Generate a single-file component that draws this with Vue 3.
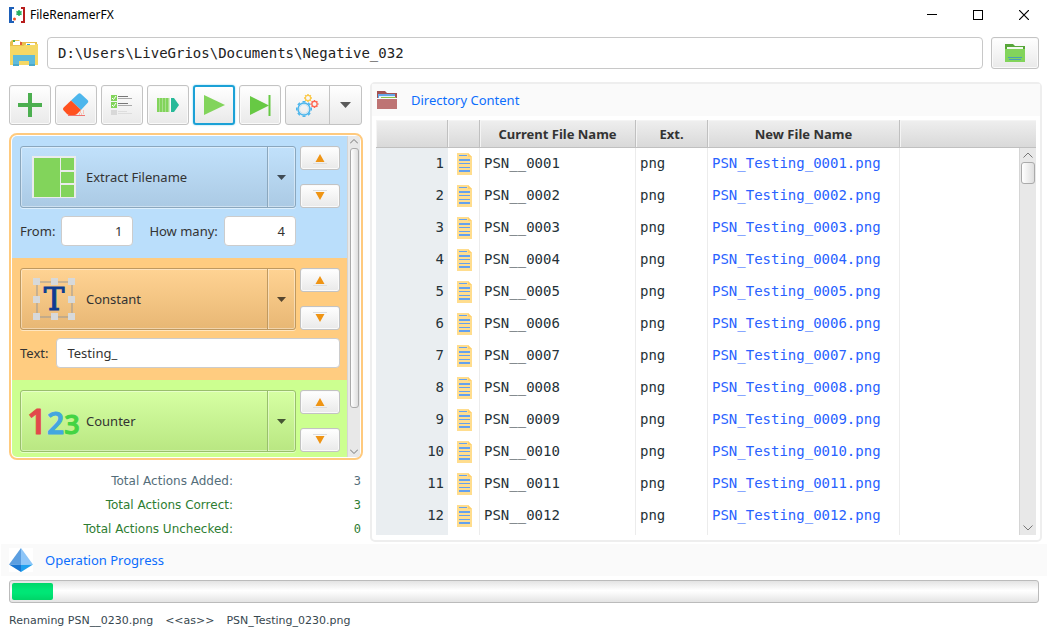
<script setup>
import { ref } from 'vue'

const path = ref('D:\\Users\\LiveGrios\\Documents\\Negative_032')
const from = ref('1')
const howMany = ref('4')
const constantText = ref('Testing_')

const rows = Array.from({ length: 12 }, (_, i) => {
  const n = String(i + 1).padStart(4, '0')
  return { id: i + 1, current: `PSN__${n}`, ext: 'png', next: `PSN_Testing_${n}.png` }
})

const actions = [
  { key: 'extract', label: 'Extract Filename' },
  { key: 'constant', label: 'Constant' },
  { key: 'counter', label: 'Counter' }
]

const totals = [
  { label: 'Total Actions Added:', value: 3, tone: 'slate' },
  { label: 'Total Actions Correct:', value: 3, tone: 'green' },
  { label: 'Total Actions Unchecked:', value: 0, tone: 'green' }
]

const progress = 4
const gearTeeth = [0, 45, 90, 135, 180, 225, 270, 315]
</script>

<template>
  <div class="window">
    <header class="titlebar">
      <svg class="app-icon" width="16" height="16" viewBox="0 0 16 16" aria-hidden="true">
        <path d="M0 0h5v2H3v12h2v2H0z" fill="#1d5fb8" />
        <path d="M16 0h-4v2h2v12h-2v2h4z" fill="#b71c1c" />
        <path d="M10 3v6M7.400 4.500l5.200 3M12.600 4.500l-5.200 3" stroke="#27ae60" stroke-width="1.500" />
        <circle cx="5.500" cy="12" r="1.500" fill="#f4511e" />
      </svg>
      <span class="title">FileRenamerFX</span>
      <div class="window-controls">
        <button type="button" aria-label="Minimize"><svg width="10" height="10"><path d="M0 4.500h10" stroke="#000" /></svg></button>
        <button type="button" aria-label="Maximize"><svg width="10" height="10"><rect x=".5" y=".5" width="9" height="9" fill="none" stroke="#000" /></svg></button>
        <button type="button" aria-label="Close"><svg width="10" height="10"><path d="M0 0l10 10M10 0L0 10" stroke="#000" stroke-width="1.200" /></svg></button>
      </div>
    </header>

    <div class="path-row">
      <svg width="30" height="30" viewBox="0 0 30 30" aria-hidden="true">
        <path d="M1 4l2-2h7l2 2h16v22H1z" fill="#e8bf4b" />
        <path d="M4 3h7v4H4z" fill="#fff" /><path d="M4 2h2v2H4z" fill="#4caf50" /><path d="M11 4h2v3h-2z" fill="#e05a3a" />
        <path d="M1 8h13l3-2h12v21H1z" fill="#f5d865" />
        <path d="M17 5h9v2h-9z" fill="#fff" /><path d="M18 6h3v1h-3z" fill="#29a3dc" />
        <path d="M4 17h22v11h-6v-5H10v5H4z" fill="#5fbbdb" />
        <path d="M4 26h6v2H4zM20 26h6v2h-6z" fill="#4aa9cb" />
      </svg>
      <textarea v-model="path" class="path-input" rows="1" wrap="off" aria-label="Directory path" spellcheck="false"></textarea>
      <button type="button" class="btn browse" aria-label="Browse directory">
        <svg width="20" height="18" viewBox="0 0 20 18">
          <path d="M0 0h8l2 2h10v4H0z" fill="#57a639" /><path d="M2 3h16v3H2z" fill="#f3faef" />
          <path d="M0 5h20v13H0z" fill="#82d45b" /><path d="M3 13.500h14M4 15.500h12" stroke="#4a9fb5" />
        </svg>
      </button>
    </div>

    <main class="main">
      <section class="left" aria-label="Rename actions">
        <div class="toolbar">
          <button type="button" class="btn tool" aria-label="Add action">
            <svg width="24" height="24"><path d="M12 0v24M0 12h24" stroke="#4caf50" stroke-width="4" /></svg>
          </button>
          <button type="button" class="btn tool" aria-label="Clear actions">
            <svg width="26" height="24" viewBox="0 0 26 24">
              <path d="M8 7.500L15 1q1.500-1.300 3 0l6.500 6q1.500 1.500 0 3L18 17z" fill="#4db6ec" />
              <path d="M8 7.500L18 17l-4 4q-1 1-2.500 1H6.500q-1.500 0-2.500-1l-3.300-3.400q-1.400-1.600 0-3.200z" fill="#ff511f" />
              <path d="M5 22.500h17" stroke="#ef7470" />
              <path d="M17 19h1M20 18h1M18 21h1M16 21h1M20 20h1" stroke="#ff9a7d" />
            </svg>
          </button>
          <button type="button" class="btn tool" aria-label="Check all">
            <svg width="22" height="22" viewBox="0 0 22 22">
              <path d="M0 1h6v6H0zM0 8h6v6H0z" fill="#82d45b" /><path d="M0 16h6v5H0z" fill="#d8d8d8" />
              <path d="M1 4l1.500 1.500L5 2M1 11l1.500 1.500L5 9" stroke="#fff" fill="none" />
              <path d="M7 2.500h10M7 9.500h10" stroke="#777" /><path d="M7 4.500h14M7 11.500h14" stroke="#aaa" />
              <path d="M7 17.500h9M7 19.500h14" stroke="#ddd" />
            </svg>
          </button>
          <button type="button" class="btn tool" aria-label="Queue">
            <svg width="22" height="14" viewBox="0 0 22 14">
              <path d="M0 0h13v14H0z" fill="#a8df8e" /><path d="M1 0v14M4 0v14M7 0v14M10 0v14" stroke="#82d45b" stroke-width="2" />
              <path d="M14 0h3l5 7-5 7h-3z" fill="#27b999" /><path d="M13 0v14" stroke="#fff" />
            </svg>
          </button>
          <button type="button" class="btn tool focused" aria-label="Run">
            <svg width="21" height="20"><path d="M0 0l21 10L0 20z" fill="#82d45b" /></svg>
          </button>
          <button type="button" class="btn tool" aria-label="Run to end">
            <svg width="21" height="21"><path d="M0 1l19 9.500L0 20z" fill="#67c944" /><path d="M19.500 0v21" stroke="#67c944" stroke-width="2" /></svg>
          </button>
          <div class="split">
            <button type="button" class="split-main" aria-label="Settings">
              <svg width="23" height="23" viewBox="0 0 23 23">
                <g fill="none" stroke="#4db6ec">
                  <circle cx="8" cy="15" r="6" stroke-width="1.500" />
                  <path v-for="a in gearTeeth" :key="a" d="M8 8.500v-1.500" stroke-width="3" :transform="`rotate(${a} 8 15)`" />
                </g>
                <circle cx="8" cy="15" r="4.500" fill="none" stroke="#b6ddf2" stroke-width=".7" />
                <g fill="none" stroke="#fbc94a">
                  <circle cx="12" cy="4" r="2.600" stroke-width="1.200" />
                  <path v-for="a in gearTeeth" :key="a" d="M12 1.200V0" stroke-width="1.500" :transform="`rotate(${a} 12 4)`" />
                </g>
                <g fill="none" stroke="#ff6650">
                  <circle cx="18.500" cy="10" r="2.600" stroke-width="1.200" />
                  <path v-for="a in gearTeeth" :key="a" d="M18.500 7.200V6" stroke-width="1.500" :transform="`rotate(${a} 18.500 10)`" />
                </g>
              </svg>
            </button>
            <button type="button" class="split-menu" aria-label="More settings">
              <svg width="11" height="6"><path d="M0 0h11L5.500 6z" fill="#5a5a5a" /></svg>
            </button>
          </div>
        </div>

        <div class="action-list">
          <div class="action-items">
            <article v-for="a in actions" :key="a.key" class="action" :class="a.key">
              <div class="action-head">
                <div class="card">
                  <button type="button" class="card-main">
                    <span class="card-icon">
                      <svg v-if="a.key === 'extract'" width="44" height="42" viewBox="0 0 44 42">
                        <path d="M0 0h44v42H0z" fill="#eaeceb" />
                        <path d="M2 2h26v39H2zM29 2h13v12H29zM29 16h13v11H29zM29 29h13v12H29z" fill="#82d45b" />
                      </svg>
                      <svg v-else-if="a.key === 'constant'" width="44" height="44" viewBox="0 0 44 44">
                        <path d="M5 5h35v35H5z" fill="none" stroke="#999" />
                        <path d="M1 1h7v7H1zM19 1h7v7h-7zM36 1h7v7h-7zM1 19h7v7H1zM36 19h7v7h-7zM1 36h7v7H1zM19 36h7v7h-7zM36 36h7v7h-7z" fill="#d7d9da" />
                        <text x="22" y="33" text-anchor="middle" class="glyph-t">T</text>
                      </svg>
                      <svg v-else width="54" height="56" viewBox="0 0 54 56">
                        <text x="0" y="41" class="digits"><tspan class="d1">1</tspan><tspan class="d2">2</tspan><tspan class="d3">3</tspan></text>
                      </svg>
                    </span>
                    <span>{{ a.label }}</span>
                  </button>
                  <button type="button" class="card-menu" :aria-label="`${a.label} options`">
                    <svg width="9" height="5"><path d="M0 0h9L4.500 5z" fill="#000" fill-opacity=".65" /></svg>
                  </button>
                </div>
                <div class="movers">
                  <button type="button" class="btn mover" :aria-label="`Move ${a.label} up`">
                    <svg width="14" height="14"><path d="M7 3l4.500 8h-9z" fill="#ef9414" /><path d="M0 12.500h14" stroke="#ddd" /></svg>
                  </button>
                  <button type="button" class="btn mover" :aria-label="`Move ${a.label} down`">
                    <svg width="14" height="14"><path d="M7 11l4.500-8h-9z" fill="#ef9414" /><path d="M0 1.500h14" stroke="#ddd" /></svg>
                  </button>
                </div>
              </div>
              <div v-if="a.key === 'extract'" class="fields">
                <label for="from">From:</label>
                <input id="from" v-model="from" class="num" type="text" />
                <label for="count" class="second">How many:</label>
                <input id="count" v-model="howMany" class="num" type="text" />
              </div>
              <div v-else-if="a.key === 'constant'" class="fields">
                <label for="text">Text:</label>
                <input id="text" v-model="constantText" class="wide" type="text" />
              </div>
            </article>
          </div>
          <div class="scroll slim" aria-hidden="true">
            <svg width="8" height="5"><path d="M0 4.500l4-4 4 4" fill="none" stroke="#777" /></svg>
            <div class="track"><div class="thumb"></div></div>
            <svg width="8" height="5"><path d="M0 .5l4 4 4-4" fill="none" stroke="#777" /></svg>
          </div>
        </div>

        <dl class="totals">
          <div v-for="t in totals" :key="t.label" :class="t.tone">
            <dt>{{ t.label }}</dt>
            <dd>{{ t.value }}</dd>
          </div>
        </dl>
      </section>

      <section class="directory">
        <h2 class="band">
          <svg width="20" height="18" viewBox="0 0 20 18" aria-hidden="true">
            <path d="M0 0h8l2 2h10v5H0z" fill="#a35252" /><path d="M1 3h17v4H1z" fill="#64a8e8" />
            <path d="M2 5h16v2H2z" fill="#e6f1fb" /><path d="M4 6.500h15" stroke="#8bc34a" />
            <path d="M0 8h20v10H0z" fill="#be7474" />
          </svg>
          Directory Content
        </h2>
        <div class="table-wrap">
          <table>
            <colgroup><col class="c-num" /><col class="c-icon" /><col class="c-name" /><col class="c-ext" /><col class="c-new" /><col /></colgroup>
            <thead>
              <tr><th></th><th></th><th scope="col">Current File Name</th><th scope="col">Ext.</th><th scope="col">New File Name</th><th></th></tr>
            </thead>
            <tbody>
              <tr v-for="r in rows" :key="r.id">
                <td class="num-cell">{{ r.id }}</td>
                <td class="icon-cell">
                  <svg width="15" height="22" viewBox="0 0 15 22">
                    <path d="M0 0h11l4 4v18H0z" fill="#ffdd8e" /><path d="M11 0l4 4h-4z" fill="#ffd06c" />
                    <path d="M2 2.500h8M2 10.500h11M2 14.500h11" stroke="#64a1ee" /><path d="M2 7h11M2 18h11" stroke="#64a1ee" stroke-width="2" />
                  </svg>
                </td>
                <td>{{ r.current }}</td>
                <td>{{ r.ext }}</td>
                <td class="new-name">{{ r.next }}</td>
                <td></td>
              </tr>
              <tr class="tail" aria-hidden="true"><td class="num-cell"></td><td></td><td></td><td></td><td></td><td></td></tr>
            </tbody>
          </table>
          <div class="scroll table-scroll" aria-hidden="true">
            <svg width="10" height="6"><path d="M.5 5.500L5 1l4.500 4.500" fill="none" stroke="#777" /></svg>
            <div class="track"><div class="thumb"></div></div>
            <svg width="10" height="6"><path d="M.5 .5L5 5 9.500 .5" fill="none" stroke="#777" /></svg>
          </div>
        </div>
      </section>
    </main>

    <footer class="operation">
      <h2 class="band">
        <svg width="24" height="24" viewBox="0 0 24 24" aria-hidden="true">
          <path d="M0 0h24v24H0z" fill="#fff" />
          <path d="M12 0v17L0 16.500z" fill="#5b9ee0" /><path d="M12 0l12 16.500L12 17z" fill="#8ec6f8" />
          <path d="M0 16.500l12 .5v7z" fill="#1976d2" /><path d="M24 16.500L12 17v7z" fill="#1ea0ee" />
        </svg>
        Operation Progress
      </h2>
      <div class="progress" role="progressbar" aria-label="Operation Progress" aria-valuemin="0" aria-valuemax="100" :aria-valuenow="progress">
        <div class="bar" :style="{ width: progress + '%' }"></div>
      </div>
      <p class="status"><span>Renaming PSN__0230.png</span><span>&lt;&lt;as&gt;&gt;</span><span>PSN_Testing_0230.png</span></p>
    </footer>
  </div>
</template>

<style>
body { margin: 0; background: #fff; }
</style>

<style scoped>
* { box-sizing: border-box; }
button, input { font: inherit; color: inherit; margin: 0; padding: 0; }
button { background: none; border: 0; }
svg { display: block; flex: none; }
.window {
  display: flex; flex-direction: column; height: 100vh; min-height: 560px;
  background: #fff; color: #333; font: 13px/20px "Noto Sans", "Open Sans", sans-serif; overflow: hidden;
}
.titlebar { display: flex; align-items: center; height: 30px; flex: none; padding: 0 1px 0 9px; color: #000; font-size: 12px; }
.title { margin-left: 5px; }
.window-controls { display: flex; margin-left: auto; }
.window-controls button { display: grid; place-items: center; width: 46px; height: 30px; }
.path-row { display: flex; align-items: center; gap: 8px; flex: none; margin-top: 7px; padding: 0 9px; }
.path-input {
  display: block; flex: 1; min-width: 0; height: 32px; margin: 0; padding: 4px 10px; overflow: hidden; resize: none;
  border: 1px solid #c8c8c8; border-radius: 4px; background: #fff;
  font: 14px/22px "DejaVu Sans Mono", monospace; color: #222;
}
.btn {
  display: grid; place-items: center; border: 1px solid #c3c3c3; border-radius: 3px;
  background: linear-gradient(#fff, #e9e9e9); box-shadow: inset 0 0 0 1px #fafafa;
}
.browse { width: 48px; height: 32px; }
.main { display: flex; flex: 1; gap: 7px; min-height: 0; padding: 13px 6px 2px 9px; }
.left { display: flex; flex-direction: column; flex: none; width: 354px; padding: 3px 0 1px; }
.toolbar { display: flex; gap: 4px; flex: none; }
.tool { width: 42px; height: 40px; }
.focused { border: 2px solid #1ba1d6; box-shadow: 0 0 2px #7fd0ee; }
.split {
  display: flex; width: 77px; height: 40px; border: 1px solid #c3c3c3; border-radius: 3px;
  background: linear-gradient(#fff, #e9e9e9);
}
.split button { display: grid; place-items: center; }
.split-main { flex: 1; border-right: 1px solid #c3c3c3; }
.split-menu { width: 31px; }
.action-list {
  display: flex; flex: 1; min-height: 0; margin-top: 8px; padding: 1px; overflow: hidden;
  border: 2px solid #ffca7e; border-radius: 8px; background: #fff;
}
.action-items { flex: 1; min-width: 0; overflow: hidden; border-radius: 5px 0 0 5px; }
.action { min-height: 122px; padding: 10px 7px 0 8px; }
.extract { background: #badefb; --top: #c1e1fb; --bottom: #abcae4; --edge: #8ba7bd; }
.constant { background: #ffcc80; --top: #ffd393; --bottom: #e8b774; --edge: #bf9960; }
.counter { background: #ccff90; --top: #d6ffa3; --bottom: #b9e782; --edge: #99bf6c; }
.action-head { display: flex; gap: 4px; }
.card {
  display: flex; flex: 1; height: 62px; border: 1px solid var(--edge); border-radius: 3px;
  background: linear-gradient(var(--top), var(--bottom));
  box-shadow: inset 0 0 0 1px rgba(255, 255, 255, .4), 0 1px 0 rgba(255, 255, 255, .5);
}
.card-main { display: flex; align-items: center; flex: 1; padding-left: 8px; text-align: left; }
.card-icon { display: grid; place-items: center; place-content: center; width: 50px; height: 60px; margin-right: 7px; }
.card-menu { display: grid; place-items: center; width: 28px; border-left: 1px solid var(--edge); box-shadow: inset 1px 0 0 rgba(255, 255, 255, .4); }
.glyph-t { font: 31px "DejaVu Serif", serif; fill: #0d3c91; stroke: #0d3c91; stroke-width: 1; }
.digits { font-family: "Open Sans", sans-serif; font-weight: 600; stroke-width: 1; stroke-linejoin: round; }
.d1 { font-size: 35px; fill: #e2494b; stroke: #e2494b; }
.d2 { font-size: 30px; fill: #43a6e0; stroke: #43a6e0; }
.d3 { font-size: 27px; fill: #43d443; stroke: #43d443; }
.movers { display: flex; flex-direction: column; justify-content: space-between; width: 40px; }
.mover { height: 24px; }
.fields { display: flex; align-items: center; gap: 6px; height: 30px; margin-top: 8px; }
.fields .second { margin-left: 10px; }
.fields input { min-width: 0; height: 30px; padding: 0 10px; border: 1px solid #ccc; border-radius: 4px; background: #fff; }
.fields .num { width: 72px; text-align: right; }
.fields .wide { flex: 1; margin-left: 2px; }
.scroll { display: flex; flex-direction: column; align-items: center; background: #e8e8e8; }
.scroll .track { flex: 1; }
.thumb { border: 1px solid #aaa; border-radius: 3px; background: linear-gradient(90deg, #fff, #dedede); }
.slim { width: 13px; padding: 3px 0; border-left: 1px solid #d5d5d5; }
.slim .track { padding-top: 4px; }
.slim .thumb { width: 9px; height: 260px; }
.totals { flex: none; margin: 9px 0 0; font: 12px/24px "DejaVu Sans", sans-serif; }
.totals div { display: flex; }
.totals dt { width: 224px; text-align: right; }
.totals dd { flex: 1; margin: 0; padding-right: 2px; text-align: right; font-family: "DejaVu Sans Mono", monospace; }
.slate { color: #546e7a; }
.green { color: #2e7d32; }
.directory { display: flex; flex-direction: column; flex: 1; min-width: 0; border: 2px solid #eee; border-radius: 5px; }
.band {
  display: flex; align-items: center; flex: none; height: 32px; margin: 0; background: #fafafa;
  color: #0d6efd; font-size: 13px; font-weight: normal;
}
.directory .band { gap: 14px; padding-left: 5px; }
.table-wrap { position: relative; flex: 1; min-height: 0; margin: 4px 4px 5px; overflow: hidden; }
table { width: 100%; border-collapse: separate; border-spacing: 0; table-layout: fixed; font: 14px/20px "DejaVu Sans Mono", monospace; color: #263238; }
.c-num { width: 72px; } .c-icon { width: 32px; } .c-name { width: 156px; } .c-ext { width: 72px; } .c-new { width: 192px; }
th {
  height: 28px; padding: 0; border-right: 1px solid #c0c0c0; border-bottom: 1px solid #c0c0c0;
  background: linear-gradient(#efefef, #d9d9d9); box-shadow: inset 1px 1px 0 #f4f4f4;
  color: #333; font: bold 13px/20px "Noto Sans", "Open Sans", sans-serif;
}
th:last-child { border-right: 0; }
td { height: 32px; padding: 0 4px 2px; border-right: 1px solid #ececec; }
.icon-cell { padding: 0 0 0 9px; }
td:first-child, td:last-child { border-right: 0; }
.num-cell { background: #eaeef1; text-align: right; }
.new-name { color: #2962ff; }
.tail td { height: 8px; }
.table-scroll { position: absolute; top: 28px; right: 0; bottom: 0; width: 17px; padding: 4px 0; border-left: 1px solid #d5d5d5; }
.table-scroll .track { padding-top: 4px; }
.table-scroll .thumb { width: 14px; height: 22px; }
.operation { flex: none; }
.operation .band { gap: 12px; margin: 0 1px; padding-left: 8px; }
.progress {
  height: 23px; margin: 4px 9px 0; padding: 2px; border: 1px solid #bbb; border-radius: 3px;
  background: linear-gradient(#e3e3e3, #fff 45%, #f9f9f9 60%, #e4e4e4);
}
.bar { height: 100%; border-radius: 2px; background: linear-gradient(#00d768, #00e676 40%, #00e676 60%, #00d468); }
.status { display: flex; gap: 12px; margin: 8px 9px 6px; font: 11px/20px "DejaVu Sans", sans-serif; color: #37474f; }
</style>
